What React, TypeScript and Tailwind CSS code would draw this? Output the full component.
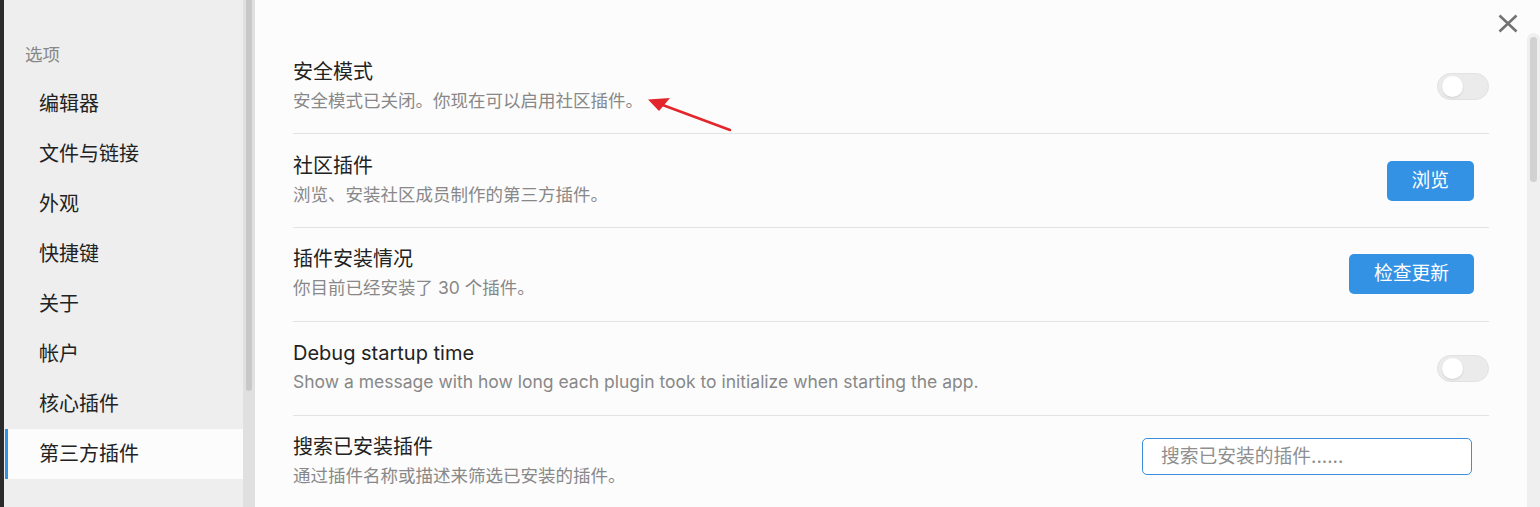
const navItems = ['编辑器', '文件与链接', '外观', '快捷键', '关于', '帐户', '核心插件', '第三方插件']

function Toggle() {
  return (
    <div className="flex h-[27px] w-[52px] items-center rounded-full border border-[#e2e2e2] bg-[#ebebeb] pl-[4px]">
      <div className="h-[21px] w-[21px] rounded-full bg-white shadow-[0_1px_2px_rgba(0,0,0,0.12)]" />
    </div>
  )
}

function Button({ label }: { label: string }) {
  return (
    <button className="mr-[15px] h-[40px] rounded-[5px] bg-[#3492e4] px-[25px] text-[18.75px] leading-[40px] text-white">
      {label}
    </button>
  )
}

function SettingRow({
  title,
  desc,
  control,
  last,
}: {
  title: string
  desc: string
  control: React.ReactNode
  last?: boolean
}) {
  return (
    <div
      className={`flex items-center justify-between pt-[17.7px] pb-[17.2px] ${
        last ? '' : 'border-b border-[#e3e3e3]'
      }`}
    >
      <div className="min-w-0">
        <div className="text-[20px] leading-[28px] text-[#222]">{title}</div>
        <div className="text-[17.5px] leading-[30px] text-[#888]">{desc}</div>
      </div>
      {control}
    </div>
  )
}

export default function App() {
  return (
    <div
      className="relative flex h-[507px] w-[1540px] overflow-hidden bg-[#fcfcfc]"
      style={{ fontFamily: 'Inter, "Noto Sans CJK SC", sans-serif' }}
    >
      {/* backdrop edge */}
      <div className="w-[4px] shrink-0 bg-[#2b2b2b]" />

      {/* Sidebar */}
      <div className="w-[239px] shrink-0 bg-[#eeeeee] pt-[40px]">
        <div className="mb-[9.4px] pl-[21px] text-[17.5px] leading-[30px] text-[#888]">选项</div>
        {navItems.map((item) => {
          const active = item === '第三方插件'
          return (
            <div
              key={item}
              className={`ml-px flex h-[50px] items-center text-[20px] text-[#222] ${
                active ? 'border-l-[3px] border-[#3492e4] bg-[#fcfcfc] pl-[31px]' : 'pl-[34px]'
              }`}
            >
              {item}
            </div>
          )
        })}
      </div>

      {/* Sidebar scrollbar */}
      <div className="w-[12px] shrink-0 bg-[#e0e0e0] px-[3px]">
        <div className="h-[391px] rounded-b-full bg-[#c8c8c8]" />
      </div>

      {/* Content */}
      <div className="relative min-w-0 flex-1 px-[38px] pt-[40px]">
        <SettingRow
          title="安全模式"
          desc="安全模式已关闭。你现在可以启用社区插件。"
          control={<Toggle />}
        />
        <SettingRow
          title="社区插件"
          desc="浏览、安装社区成员制作的第三方插件。"
          control={<Button label="浏览" />}
        />
        <SettingRow
          title="插件安装情况"
          desc="你目前已经安装了 30 个插件。"
          control={<Button label="检查更新" />}
        />
        <SettingRow
          title="Debug startup time"
          desc="Show a message with how long each plugin took to initialize when starting the app."
          control={<Toggle />}
        />
        <SettingRow
          title="搜索已安装插件"
          desc="通过插件名称或描述来筛选已安装的插件。"
          last
          control={
            <input
              placeholder="搜索已安装的插件......"
              className="mr-[17px] mb-[12px] h-[37px] w-[330px] rounded-[5px] border border-[#3b8fdd] bg-white pl-[18px] text-[18.75px] outline-none placeholder:text-[#8f8f8f]"
            />
          }
        />
      </div>

      {/* Content scrollbar */}
      <div className="w-[13px] shrink-0 pt-[33px]">
        <div className="h-full rounded-t-full bg-[#efefef] px-[3px] pt-[4px]">
          <div className="h-[145px] rounded-full bg-[#d1d1d1]" />
        </div>
      </div>

      {/* Close */}
      <svg className="absolute left-[1497px] top-[13px]" width="22" height="21" viewBox="0 0 22 21">
        <path d="M2.5 2.5 L19.5 18.5 M19.5 2.5 L2.5 18.5" stroke="#727272" strokeWidth="2.6" strokeLinecap="butt" />
      </svg>

      {/* Annotation arrow */}
      <svg className="absolute left-[640px] top-[90px]" width="100" height="50" viewBox="640 90 100 50">
        <line x1="730" y1="130" x2="660" y2="104" stroke="#e3262b" strokeWidth="2.5" strokeLinecap="round" />
        <polygon points="648,99.5 670,98 659,111" fill="#e3262b" />
      </svg>
    </div>
  )
}
